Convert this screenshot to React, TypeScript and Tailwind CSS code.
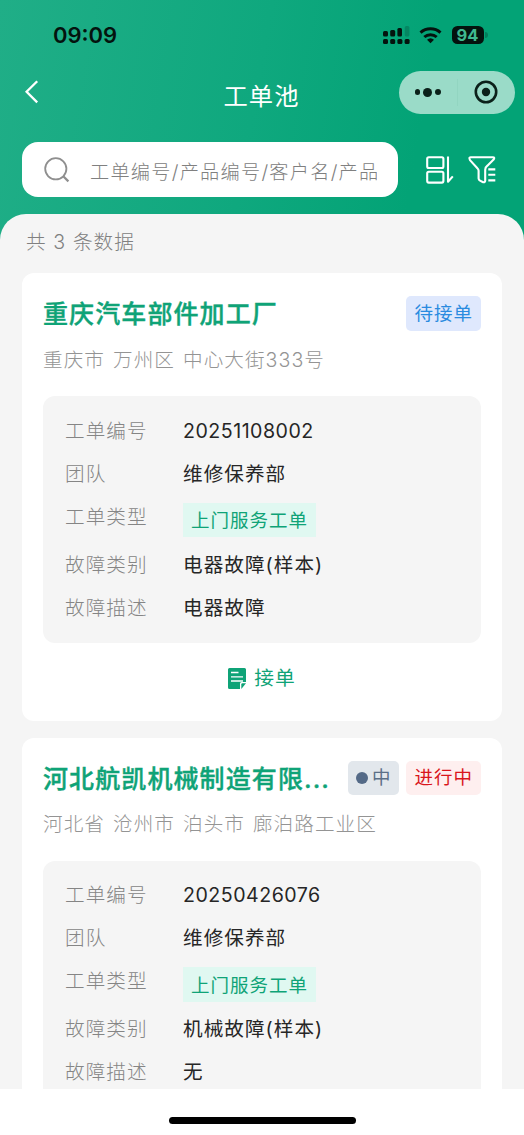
import { ReactNode } from 'react';
import { clsx } from 'clsx';

interface WorkOrder {
  customer: string;
  address: string;
  code: string;
  team: string;
  type: string;
  category: string;
  description: string;
  priority?: string;
  status: 'pending' | 'processing';
}

const orders: WorkOrder[] = [
  {
    customer: '重庆汽车部件加工厂',
    address: '重庆市 万州区 中心大街333号',
    code: '20251108002',
    team: '维修保养部',
    type: '上门服务工单',
    category: '电器故障(样本)',
    description: '电器故障',
    status: 'pending',
  },
  {
    customer: '河北航凯机械制造有限...',
    address: '河北省 沧州市 泊头市 廊泊路工业区',
    code: '20250426076',
    team: '维修保养部',
    type: '上门服务工单',
    category: '机械故障(样本)',
    description: '无',
    priority: '中',
    status: 'processing',
  },
];

const statusMap = {
  pending: { label: '待接单', className: 'bg-[#dfe8fd] text-[#2a8be0]' },
  processing: { label: '进行中', className: 'bg-[#feefef] text-[#d9161c]' },
};

function StatusBar() {
  return (
    <div className="flex h-[70px] items-center justify-between pl-[53px] pr-[36px]">
      <span className="text-[22px] font-semibold leading-none text-[#04130e]">09:09</span>
      <div className="flex items-center">
        <svg width="28" height="18" viewBox="0 0 28 18" fill="#04130e">
          <rect x="0" y="5" width="5" height="5.5" rx="1.5" />
          <rect x="7.2" y="4" width="5" height="6.5" rx="1.5" />
          <rect x="14.4" y="2" width="4.6" height="8.5" rx="1.5" />
          <rect x="21.8" y="0" width="4.6" height="10.5" rx="1.5" opacity="0.2" />
          <rect x="0" y="13" width="5" height="5" rx="1.5" />
          <rect x="7.2" y="13" width="5" height="5" rx="1.5" />
          <rect x="14.4" y="13" width="5" height="5" rx="1.5" />
          <rect x="21.6" y="13" width="5" height="5" rx="1.5" />
        </svg>
        <svg className="ml-2" width="24" height="18" viewBox="0 0 24 18" fill="none" stroke="#04130e" strokeWidth="3">
          <path d="M1.5 6.6a15 15 0 0 1 20 0" />
          <path d="M5.3 11a9.3 9.3 0 0 1 12.4 0" />
          <path d="M11.5 17.3 8 13.8a5.2 5.2 0 0 1 7 0Z" fill="#04130e" stroke="none" />
        </svg>
        <div className="ml-[9px] flex h-[18.5px] w-8 items-center justify-center rounded-[5.5px] bg-[#04130e] text-[16.5px] font-bold leading-none text-[#3fb98f]">
          94
        </div>
        <div className="ml-[1.5px] h-1.5 w-[3px] rounded-r-full bg-[#04130e]/25" />
      </div>
    </div>
  );
}

function NavBar() {
  return (
    <div className="grid h-[44px] grid-cols-[116px_1fr_116px] items-center pl-[8px] pr-[9px]">
      <svg className="ml-[16px]" width="16" height="26" viewBox="0 0 16 26" fill="none" stroke="#fff" strokeWidth="2.3">
        <path d="M13.2 2.2 2.6 12.8l10.6 10.6" />
      </svg>
      <h1 className="pt-[8px] text-center text-[24.3px] leading-none tracking-[1px] text-white">工单池</h1>
      <div className="flex h-[43px] w-[116px] items-center rounded-full bg-[#9adbc8]">
        <div className="flex flex-1 items-center justify-center gap-[3px]">
          <span className="h-[5.5px] w-[5.5px] rounded-full bg-[#0b211a]" />
          <span className="h-[9px] w-[9px] rounded-full bg-[#0b211a]" />
          <span className="h-[5.5px] w-[5.5px] rounded-full bg-[#0b211a]" />
        </div>
        <span className="h-[27px] w-px bg-[#92d5c1]" />
        <div className="flex flex-1 items-center justify-center">
          <svg width="24" height="24" viewBox="0 0 24 24">
            <circle cx="12" cy="12" r="10.2" fill="none" stroke="#0b211a" strokeWidth="2.6" />
            <circle cx="12" cy="12" r="4.2" fill="#0b211a" />
          </svg>
        </div>
      </div>
    </div>
  );
}

function SearchBar() {
  return (
    <div className="mt-[28px] flex h-[55px] items-center pl-[22px]">
      <div className="flex h-full w-[376px] items-center rounded-[16px] bg-white pl-[22px] pr-[21px]">
        <svg className="shrink-0" width="26" height="26" viewBox="0 0 26 26" fill="none" stroke="#8f8f8f" strokeWidth="1.8">
          <circle cx="11.8" cy="11.8" r="10.6" />
          <path d="m19 19 5.4 5.4" strokeWidth="2.2" />
        </svg>
        <div className="ml-[20px] mt-1 flex-1 overflow-hidden whitespace-nowrap text-[19.2px] font-light leading-7 tracking-[1.25px] text-[#808080]">
          工单编号/产品编号/客户名/产品
        </div>
      </div>
      {/* 排序 */}
      <svg className="ml-[28px]" width="28" height="28" viewBox="0 0 28 28" fill="none" stroke="#fff" strokeWidth="2.1">
        <rect x="1.2" y="1.2" width="16.2" height="10.8" rx="1.5" />
        <rect x="1.2" y="15.8" width="16.2" height="10.8" rx="1.5" />
        <path d="M22 .6v25.2l4.8-5.4" strokeLinejoin="round" />
      </svg>
      {/* 筛选 */}
      <svg className="ml-[14px]" width="28" height="28" viewBox="0 0 28 28" fill="none" stroke="#fff" strokeWidth="2.1" strokeLinejoin="round">
        <path d="M17.2 16v8.5q0 2-2 1.7l-3.2-1.6q-1.4-.7-1.4-2v-7.8q0-1.4-1-2.3L2.2 4.4Q.4 1.2 2.6 1.2h22.2q2.4 0 .8 2.4l-6.2 6.1q-2.2 1.6-2.2 4Z" />
        <path d="M20.3 13.4h7M20.3 18.8h7M20.3 24.4h7" />
      </svg>
    </div>
  );
}

function Tag({ className, children }: { className: string; children: ReactNode }) {
  return (
    <span className={clsx('flex h-[34.5px] shrink-0 items-center px-2 pt-px text-[18.5px] tracking-[1px]', className)}>
      {children}
    </span>
  );
}

function Field({ label, children }: { label: string; children: ReactNode }) {
  return (
    <div className="flex items-start leading-[28px]">
      <span className="w-[118px] shrink-0 font-light text-[#858585]">{label}</span>
      <div className="text-[#262626]">{children}</div>
    </div>
  );
}

function OrderCard({ order }: { order: WorkOrder }) {
  const status = statusMap[order.status];

  return (
    <div className="rounded-[12px] bg-white px-[21px] pt-[23px]">
      {/* 标题 */}
      <div className="flex h-[34.5px] items-center">
        <h2 className="flex-1 whitespace-nowrap pt-[3px] text-[25px] font-medium tracking-[1.1px] text-[#0fa377] [-webkit-text-stroke:0.4px_#0fa377]">
          {order.customer}
        </h2>
        {order.priority && (
          <Tag className="gap-[4px] rounded-[5px] bg-[#e2e7ec] text-[#5b6f87]">
            <i className="h-3 w-3 rounded-full bg-[#546a87]" />
            {order.priority}
          </Tag>
        )}
        <Tag className={clsx('ml-[7px] rounded-[5px]', status.className)}>{status.label}</Tag>
      </div>

      <p className="mt-[15px] text-[19.6px] font-light leading-[28px] tracking-[1.05px] text-[#949494] [word-spacing:1.5px]">
        {order.address}
      </p>

      <div className="mt-[22.5px] flex flex-col gap-[15px] rounded-[12px] bg-[#f5f5f5] px-[22px] pb-[21px] pt-[20.5px] text-[19.6px] tracking-[1.05px]">
        <Field label="工单编号">
          <span className="tracking-[0.5px]">{order.code}</span>
        </Field>
        <Field label="团队">{order.team}</Field>
        <Field label="工单类型">
          <div className="h-[33px]">
            <Tag className="bg-[#e0f8f1] text-[#0fa377]">{order.type}</Tag>
          </div>
        </Field>
        <Field label="故障类别">{order.category}</Field>
        <Field label="故障描述">{order.description}</Field>
      </div>

      <button className="flex h-[78.5px] w-full items-center justify-center gap-2 pb-[7px] text-[19.8px] tracking-[1px] text-[#0fa377]">
        <svg width="18" height="21" viewBox="0 0 18 21">
          <path d="M1.5 0h15Q18 0 18 1.5V14h-4.5Q12 14 12 15.5V21H1.5Q0 21 0 19.5v-18Q0 0 1.5 0Z" fill="#0fa377" />
          <path d="M13.3 21v-4.5q0-1.2 1.2-1.2H18Z" fill="#0fa377" />
          <path d="M3 4.5h7.5M3 8.8h12M3 13h12" stroke="#fff" strokeWidth="1.3" />
        </svg>
        <span className="pt-px">接单</span>
      </button>
    </div>
  );
}

export default function App() {
  return (
    <div className="flex h-[1135px] w-[524px] flex-col overflow-hidden bg-white font-['Inter','Noto_Sans_CJK_SC',sans-serif]">
      <div className="flex min-h-0 flex-1 flex-col bg-[linear-gradient(100deg,#20ae87_0%,#0fa87e_38%,#03a376_62%,#03a376_100%)]">
        <StatusBar />
        <NavBar />
        <SearchBar />
        <main className="mt-[17px] min-h-0 flex-1 overflow-hidden rounded-t-[26px] bg-[#f5f5f5] px-[22px]">
          <p className="h-[59px] pl-1 pt-[14px] text-[19.6px] font-light leading-[28px] tracking-[1.1px] text-[#808080]">共 3 条数据</p>
          <div className="flex flex-col gap-[16.5px]">
            {orders.map((order) => (
              <OrderCard key={order.code} order={order} />
            ))}
          </div>
        </main>
      </div>
      {/* 底部安全区 */}
      <footer className="flex h-[46px] shrink-0 justify-center bg-white pt-[28px]">
        <div className="h-[7px] w-[187px] rounded-full bg-black" />
      </footer>
    </div>
  );
}
